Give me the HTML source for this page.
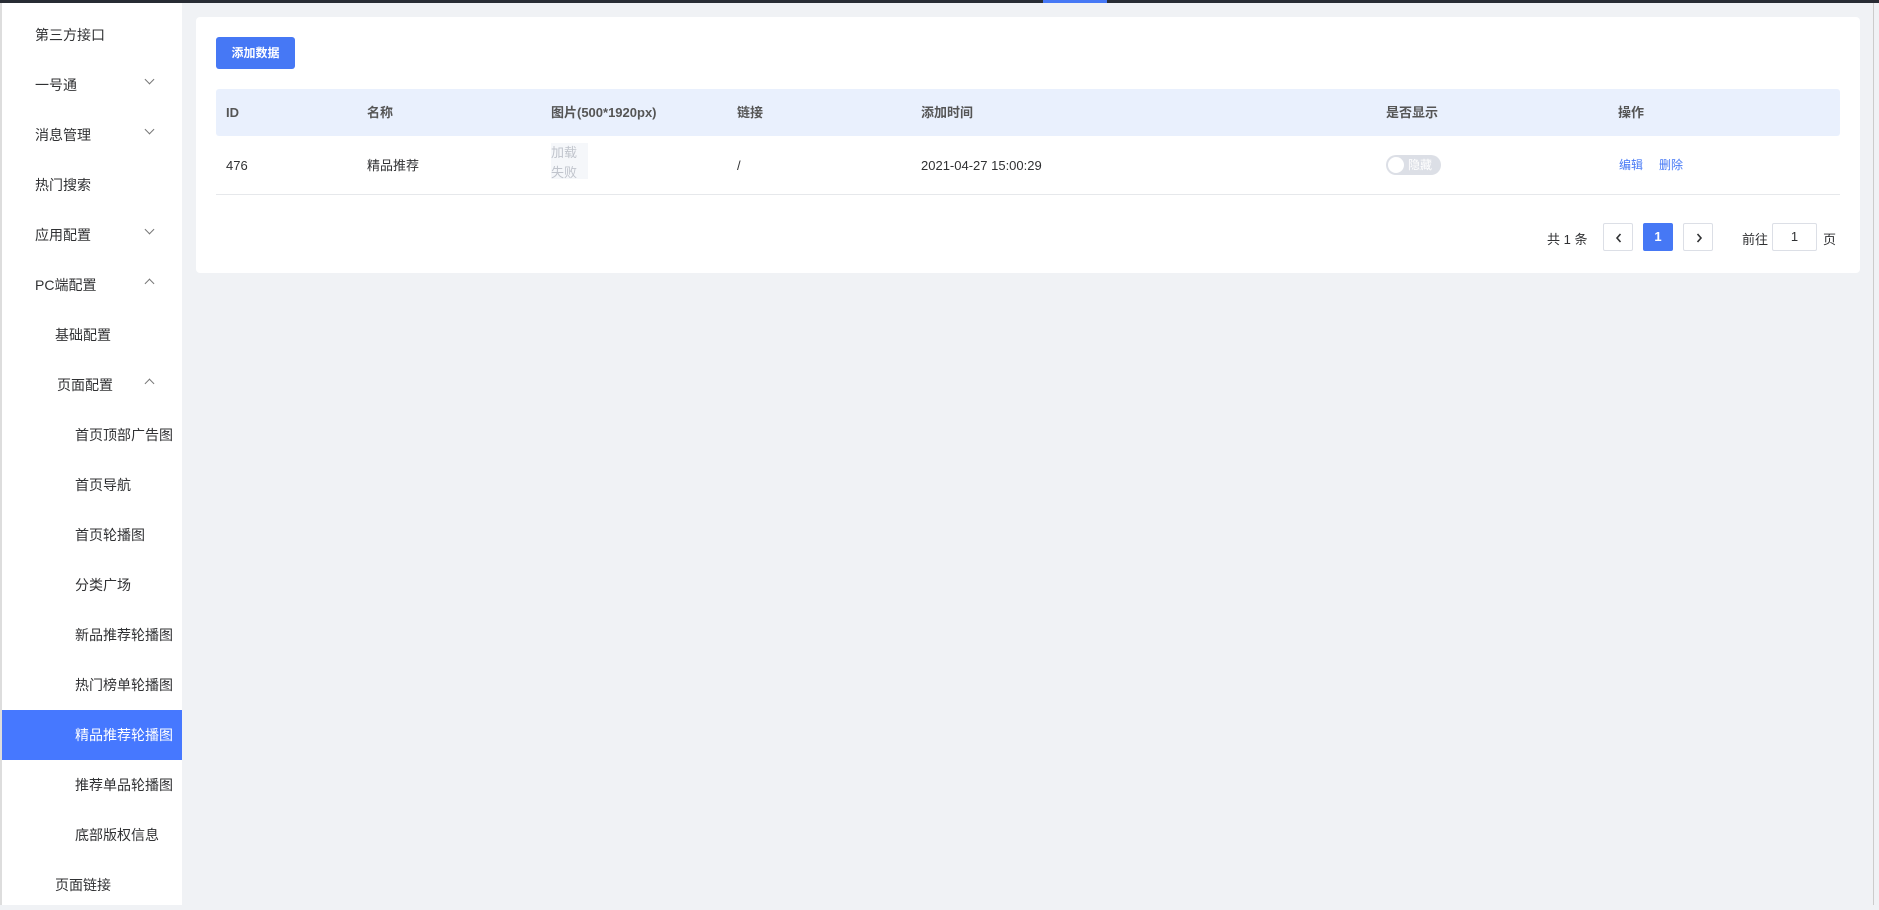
<!DOCTYPE html>
<html><head><meta charset="utf-8"><style>
*{margin:0;padding:0;box-sizing:border-box}
body{width:1879px;height:905px;overflow:hidden;background:#f0f2f5;font-family:"Liberation Sans","Noto Sans CJK SC",sans-serif;position:relative;color:#303133}
.top{position:absolute;left:0;top:0;width:1879px;height:3px;background:#282c34}
.top i{position:absolute;left:1043px;top:0;width:64px;height:3px;background:#4678f5}
.side{position:absolute;left:0;top:3px;width:182px;height:902px;background:#fff;border-left:2px solid #ddd}
.it{position:absolute;left:0;width:180px;height:50px;line-height:50px;font-size:14px;color:#303133}
.it.a{background:#4678ff;color:#fff}
.ch{position:absolute;left:144px;top:16px;width:7px;height:7px;border-right:1px solid #777;border-bottom:1px solid #777;transform:rotate(45deg)}
.ch.u{transform:rotate(225deg);top:20px}
.card{position:absolute;left:196px;top:17px;width:1664px;height:256px;background:#fff;border-radius:4px}
.btn{position:absolute;left:20px;top:20px;width:79px;height:32px;background:#4678f5;border-radius:3px;color:#fff;font-size:12px;font-weight:bold;text-align:center;line-height:32px}
.th{position:absolute;left:20px;top:72px;width:1624px;height:47px;background:#e9f0fd;border-radius:3px}
.c{position:absolute;font-size:13px;white-space:nowrap}
.th .c{top:0;line-height:47px;color:#555;font-weight:bold}
.row{position:absolute;left:20px;top:119px;width:1624px;height:59px;border-bottom:1px solid #e6e8eb}
.row .c{top:0;line-height:59px}
.img{position:absolute;left:335px;top:7px;width:37px;height:36px;background:#f5f7fa;color:#c0c4cc;font-size:13px;line-height:20px}
.sw{position:absolute;left:1170px;top:38px;width:55px;height:20px;border-radius:10px;background:#dcdfe6;color:#fff;font-size:12px;line-height:20px;padding-left:22px}
.sw:before{content:"";position:absolute;left:2px;top:2px;width:16px;height:16px;border-radius:50%;background:#fff}
.pb{position:absolute;top:206px;width:30px;height:28px;border:1px solid #dcdfe6;border-radius:2px;background:#fff;text-align:center;line-height:26px;font-size:13px}
.pb svg{position:absolute;left:10px;top:8px}
</style></head><body>
<div class="top"><i></i></div>
<div class="side">
<div class="it" style="top:7px;padding-left:33px">第三方接口</div>
<div class="it" style="top:57px;padding-left:33px">一号通<span class="ch"></span></div>
<div class="it" style="top:107px;padding-left:33px">消息管理<span class="ch"></span></div>
<div class="it" style="top:157px;padding-left:33px">热门搜索</div>
<div class="it" style="top:207px;padding-left:33px">应用配置<span class="ch"></span></div>
<div class="it" style="top:257px;padding-left:33px">PC端配置<span class="ch u"></span></div>
<div class="it" style="top:307px;padding-left:53px">基础配置</div>
<div class="it" style="top:357px;padding-left:55px">页面配置<span class="ch u"></span></div>
<div class="it" style="top:407px;padding-left:73px">首页顶部广告图</div>
<div class="it" style="top:457px;padding-left:73px">首页导航</div>
<div class="it" style="top:507px;padding-left:73px">首页轮播图</div>
<div class="it" style="top:557px;padding-left:73px">分类广场</div>
<div class="it" style="top:607px;padding-left:73px">新品推荐轮播图</div>
<div class="it" style="top:657px;padding-left:73px">热门榜单轮播图</div>
<div class="it a" style="top:707px;padding-left:73px">精品推荐轮播图</div>
<div class="it" style="top:757px;padding-left:73px">推荐单品轮播图</div>
<div class="it" style="top:807px;padding-left:73px">底部版权信息</div>
<div class="it" style="top:857px;padding-left:53px">页面链接</div>
</div>
<div class="card">
<div class="btn">添加数据</div>
<div class="th">
<span class="c" style="left:10px">ID</span>
<span class="c" style="left:151px">名称</span>
<span class="c" style="left:335px">图片(500*1920px)</span>
<span class="c" style="left:521px">链接</span>
<span class="c" style="left:705px">添加时间</span>
<span class="c" style="left:1170px">是否显示</span>
<span class="c" style="left:1402px">操作</span>
</div>
<div class="row">
<span class="c" style="left:10px">476</span>
<span class="c" style="left:151px">精品推荐</span>
<div class="img">加载<br>失败</div>
<span class="c" style="left:521px">/</span>
<span class="c" style="left:705px">2021-04-27 15:00:29</span>
<div class="sw" style="left:1170px;top:19px">隐藏</div>
<span class="c" style="left:1403px;color:#4678f5;font-size:12px">编辑</span>
<span class="c" style="left:1443px;color:#4678f5;font-size:12px">删除</span>
</div>
<span class="c" style="left:1351px;top:212px">共 1 条</span>
<div class="pb" style="left:1407px"><svg width="10" height="12" viewBox="0 0 10 12"><path d="M6.5 2 L3 6 L6.5 10" fill="none" stroke="#303133" stroke-width="1.6"/></svg></div>
<div class="pb" style="left:1447px;background:#4678f5;border-color:#4678f5;color:#fff;font-weight:bold">1</div>
<div class="pb" style="left:1487px"><svg width="10" height="12" viewBox="0 0 10 12"><path d="M3.5 2 L7 6 L3.5 10" fill="none" stroke="#303133" stroke-width="1.6"/></svg></div>
<span class="c" style="left:1546px;top:212px">前往</span>
<div class="pb" style="left:1576px;width:45px">1</div>
<span class="c" style="left:1627px;top:212px">页</span>
</div>
<div style="position:absolute;left:1873px;top:3px;width:1px;height:902px;background:#ccc"></div>
</body></html>
